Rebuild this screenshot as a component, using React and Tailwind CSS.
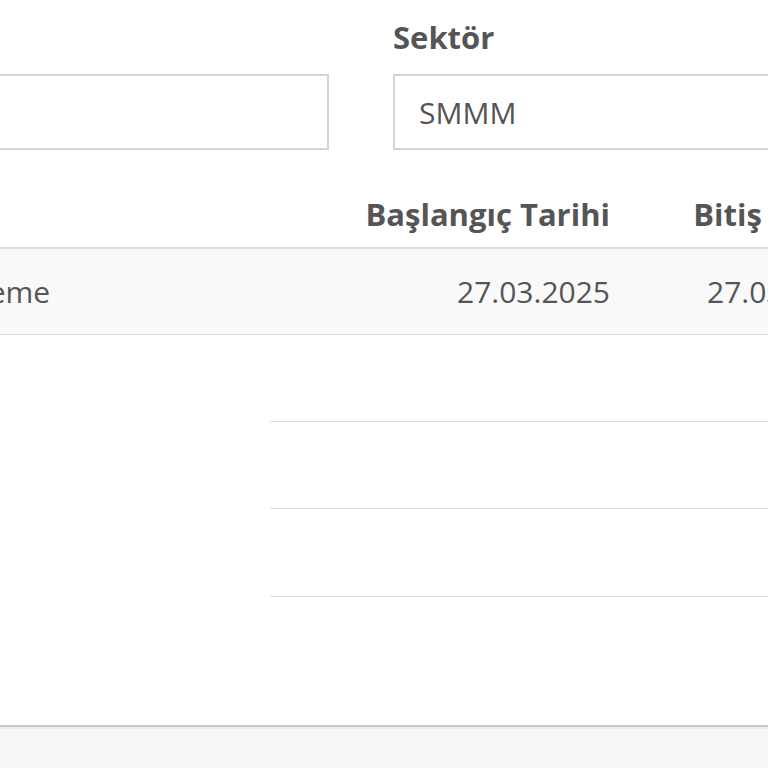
import React from "react";

export default function App() {
  return (
    <div
      className="w-[768px] h-[768px] overflow-hidden bg-white text-[#555]"
      style={{ fontFamily: '"Open Sans", "Liberation Sans", sans-serif' }}
    >
      <div className="-ml-[300px] w-[1200px]">
        {/* form */}
        <div className="pt-[17px] grid grid-cols-[629px_629px] gap-x-[64px]">
          <div>
            <label className="block h-[40px] leading-[40px] text-[31px] font-bold mb-[17px]">
              Firma
            </label>
            <div className="h-[76px] border-2 border-[#d4d4d4]" />
          </div>
          <div>
            <label className="block h-[40px] leading-[40px] text-[31px] font-bold mb-[17px]">
              Sektör
            </label>
            <div className="h-[76px] border-2 border-[#d4d4d4] flex items-center pl-[24px] text-[30px]">
              SMMM
            </div>
          </div>
        </div>

        {/* table */}
        <table className="mt-[32px] table-fixed border-collapse w-[1200px] text-[30px]">
          <colgroup>
            <col className="w-[570px]" />
            <col className="w-[355px]" />
            <col className="w-[250px]" />
            <col className="w-[25px]" />
          </colgroup>
          <thead>
            <tr className="h-[66px] border-b-2 border-[#dddddd]">
              <th className="text-left text-[31px] font-bold pl-[16px]">Açıklama</th>
              <th className="text-right text-[31px] font-bold pr-[15px] whitespace-nowrap">Başlangıç Tarihi</th>
              <th className="text-right text-[31px] font-bold pr-[15px] whitespace-nowrap">Bitiş Tarihi</th>
              <th />
            </tr>
          </thead>
          <tbody>
            <tr className="h-[86px] bg-[#f9f9f9] border-b border-[#dddddd]">
              <td className="text-left pl-[247px] whitespace-nowrap">Ödeme</td>
              <td className="text-right pr-[15px]">27.03.2025</td>
              <td className="text-right pr-[15px]">27.03.2025</td>
              <td />
            </tr>
            <tr className="h-[87px]">
              <td rowSpan={3} />
              <td className="border-b border-[#dddddd]" />
              <td className="border-b border-[#dddddd]" />
              <td className="border-b border-[#dddddd]" />
            </tr>
            <tr className="h-[87px]">
              <td className="border-b border-[#dddddd]" />
              <td className="border-b border-[#dddddd]" />
              <td className="border-b border-[#dddddd]" />
            </tr>
            <tr className="h-[88px]">
              <td className="border-b border-[#dddddd]" />
              <td className="border-b border-[#dddddd]" />
              <td className="border-b border-[#dddddd]" />
            </tr>
          </tbody>
        </table>

        <div className="h-[128px]" />

        {/* footer */}
        <div className="border-t-2 border-[#c8c8c8] bg-[#f7f7f7]">
          <div className="h-[2px] bg-[#ebebeb]" />
          <div className="h-[80px]" />
        </div>
      </div>
    </div>
  );
}
